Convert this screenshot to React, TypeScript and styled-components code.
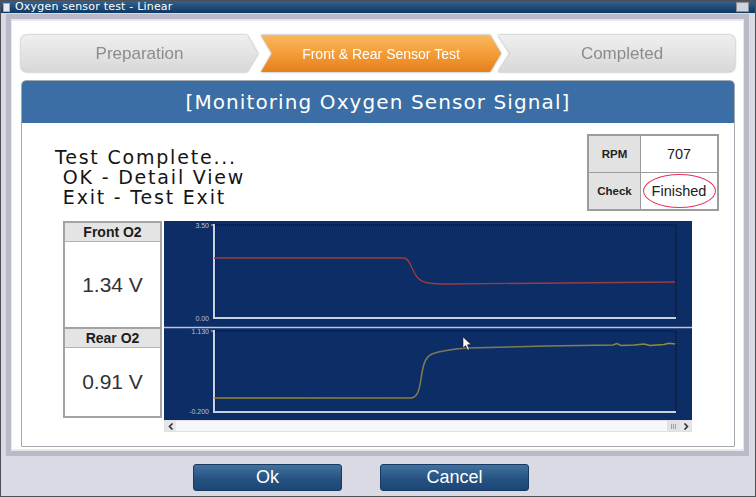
import styled, { createGlobalStyle } from 'styled-components';

const GlobalStyle = createGlobalStyle`
  html, body {
    margin: 0;
    padding: 0;
    background: #d9dae3;
  }
  body {
    width: 756px;
    height: 497px;
    overflow: hidden;
    font-family: "Liberation Sans", Arial, sans-serif;
  }
`;

const Window = styled.div`
  width: 756px;
  height: 497px;
  box-sizing: border-box;
  border: 1px solid #4d4f57;
  background: #d9dae3;
  display: flex;
  flex-direction: column;
`;

const TitleBar = styled.div`
  height: 12px;
  flex: none;
  display: flex;
  align-items: center;
  padding: 0 6px 0 2px;
  background: linear-gradient(#33618f, #0f3862);
  color: #fff;
  font: 11px/12px "DejaVu Sans", sans-serif;
  letter-spacing: 0.2px;
`;

const TitleIcon = styled.span`
  width: 5px;
  height: 7px;
  background: #e8ecf2;
  border: 1px solid #9fb0c4;
  margin-right: 5px;
`;

const CloseBox = styled.span`
  margin-left: auto;
  width: 11px;
  height: 8px;
  background: #cfd3da;
  border: 1px solid #8a8e98;
`;

const Frame = styled.div`
  margin: 1px 6px 0 5px;
  border: 5px solid #b8bac7;
  padding: 2px 1px;
  background: #e6e7ec;
`;

const Panel = styled.div`
  background: #fff;
  padding: 14px 8px 2px 9px;
`;

const StepBar = styled.div`
  display: flex;
  height: 37px;
  filter: drop-shadow(0 0 0.8px #959595);
`;

type StepKind = 'first' | 'middle' | 'last';

const shapes: Record<StepKind, string> = {
  first: 'polygon(0 0, calc(100% - 11px) 0, 100% 50%, calc(100% - 11px) 100%, 0 100%)',
  middle:
    'polygon(0 0, calc(100% - 11px) 0, 100% 50%, calc(100% - 11px) 100%, 0 100%, 11px 50%)',
  last: 'polygon(0 0, 100% 0, 100% 100%, 0 100%, 12px 50%)',
};

const Step = styled.div<{ $w: number; $kind: StepKind; $active?: boolean }>`
  flex: none;
  width: ${(p) => p.$w}px;
  margin-left: ${(p) => (p.$kind === 'middle' ? 3 : p.$kind === 'last' ? -3 : 0)}px;
  padding-left: ${(p) => (p.$kind === 'last' ? 11 : 0)}px;
  box-sizing: border-box;
  display: flex;
  align-items: center;
  justify-content: center;
  border-radius: ${(p) => (p.$kind === 'first' ? '6px 0 0 6px' : p.$kind === 'last' ? '0 6px 6px 0' : '0')};
  clip-path: ${(p) => shapes[p.$kind]};
  background: ${(p) =>
    p.$active ? 'linear-gradient(#fbb95e, #f29a34 55%, #e5801c)' : 'linear-gradient(#efefef, #d8d8d8)'};
  color: ${(p) => (p.$active ? '#fff' : '#8c8c8c')};
  font-size: ${(p) => (p.$active ? 14 : 17)}px;
`;

const Card = styled.div`
  margin-top: 8px;
  border: 1px solid #a4a8b0;
  border-radius: 5px 5px 0 0;
  overflow: hidden;
`;

const CardHeader = styled.div`
  height: 42px;
  display: flex;
  align-items: center;
  justify-content: center;
  background: #3a6ea4;
  color: #fff;
  font: 20px "DejaVu Sans", sans-serif;
  letter-spacing: 1.1px;
`;

const CardBody = styled.div`
  padding: 11px 0 14px;
`;

const TopRow = styled.div`
  display: flex;
  justify-content: space-between;
  padding: 0 15px 0 33px;
`;

const Message = styled.div`
  margin-top: 13px;
  font: 19px/20px "DejaVu Sans", sans-serif;
  letter-spacing: 1.8px;
  color: #141414;
  white-space: pre;
`;

const InfoTable = styled.table`
  border-collapse: collapse;
  width: 132px;
  height: 77px;
  border: 2px solid #9c9c9c;
  table-layout: fixed;
`;

const InfoRow = styled.tr`
  height: 37px;
`;

const LabelCell = styled.td`
  width: 51px;
  padding: 0;
  background: #e2e2e2;
  border: 1px solid #9c9c9c;
  font-size: 11.5px;
  font-weight: bold;
  text-align: center;
  color: #222;
`;

const ValueCell = styled.td`
  padding: 0;
  border: 1px solid #9c9c9c;
  text-align: center;
  vertical-align: middle;
  font-size: 14.5px;
  color: #222;
`;

const Ring = styled.span`
  display: inline-flex;
  vertical-align: middle;
  align-items: center;
  justify-content: center;
  width: 73px;
  height: 34px;
  box-sizing: border-box;
  border: 1.5px solid #e8335f;
  border-radius: 50%;
`;

const GraphRow = styled.div`
  display: flex;
  gap: 2px;
  margin-top: 10px;
  padding-left: 41px;
`;

const SensorBox = styled.div`
  width: 99px;
  height: 197px;
  box-sizing: border-box;
  border: 2px solid #a3a3a3;
  display: flex;
  flex-direction: column;
`;

const SensorHead = styled.div`
  height: 18px;
  flex: none;
  display: flex;
  align-items: center;
  justify-content: center;
  background: #e4e4e4;
  border-bottom: 1px solid #b4b4b4;
  font-size: 14px;
  font-weight: bold;
  color: #1c1c1c;
`;

const SensorValue = styled.div<{ $h: number; $divider?: boolean }>`
  height: ${(p) => p.$h}px;
  flex: none;
  display: flex;
  align-items: center;
  justify-content: center;
  border-bottom: ${(p) => (p.$divider ? '2px solid #a3a3a3' : 'none')};
  font-size: 21px;
  color: #333;
`;

const ChartCol = styled.div`
  width: 528px;
  display: flex;
  flex-direction: column;
`;

const ChartSvg = styled.svg`
  display: block;
`;

const ScrollBar = styled.div`
  height: 12px;
  box-sizing: border-box;
  display: flex;
  background: #f7f7f9;
  border: 1px solid #e0e0e4;
`;

const ScrollButton = styled.span`
  width: 11px;
  display: flex;
  align-items: center;
  justify-content: center;
  background: #e6e7ea;
`;

const ScrollGrip = styled.span`
  margin-left: auto;
  width: 13px;
  display: flex;
  align-items: center;
  justify-content: center;
  gap: 1px;
  background: #e1e2e6;
  & > i {
    width: 1px;
    height: 5px;
    background: #9da0a8;
  }
`;

const ButtonRow = styled.div`
  display: flex;
  gap: 38px;
  padding: 8px 0 0 192px;
`;

const DialogButton = styled.button`
  width: 149px;
  height: 27px;
  border: 1px solid #163a62;
  border-radius: 3px;
  background: linear-gradient(#41719f, #24507f 60%, #1c4676);
  color: #fff;
  font-family: "Liberation Sans Narrow", "Liberation Sans", Arial, sans-serif;
  font-stretch: condensed;
  font-size: 18px;
  padding: 0;
`;

const Chevron = ({ dir }: { dir: 'l' | 'r' }) => (
  <svg width="6" height="7" viewBox="0 0 6 7">
    <path
      d={dir === 'l' ? 'M4.5 0.5 L1.5 3.5 L4.5 6.5' : 'M1.5 0.5 L4.5 3.5 L1.5 6.5'}
      fill="none"
      stroke="#333"
      strokeWidth="1.6"
    />
  </svg>
);

function Chart() {
  return (
    <ChartSvg width="528" height="199" viewBox="0 0 528 199">
      <defs>
        <linearGradient id="rearLine" gradientUnits="userSpaceOnUse" x1="50" y1="0" x2="511" y2="0">
          <stop offset="0" stopColor="#9c8530" />
          <stop offset="0.42" stopColor="#8a7e3a" />
          <stop offset="0.5" stopColor="#717a62" />
          <stop offset="0.75" stopColor="#7d8048" />
          <stop offset="1" stopColor="#948d34" />
        </linearGradient>
      </defs>
      <rect width="528" height="199" fill="#0d2d66" />

      {/* front panel */}
      <rect x="51" y="4" width="461" height="93" fill="none" stroke="#020a1a" strokeDasharray="1 1" />
      <path d="M50 3 V97 H512" fill="none" stroke="#c9d0de" strokeWidth="2" />
      <path d="M47 4 H50" stroke="#c9d0de" />
      <text x="45" y="7" fontSize="7" fill="#b8c1d4" textAnchor="end" fontFamily="Liberation Sans">3.50</text>
      <text x="45" y="100" fontSize="7" fill="#b8c1d4" textAnchor="end" fontFamily="Liberation Sans">0.00</text>
      <path
        d="M50 37 L240 37 C246 37 248 50 253 56 C258 62 264 63 286 63 C330 63 420 62 511 61"
        fill="none"
        stroke="#9a3c40"
        strokeWidth="1.3"
      />

      <path d="M0 106.5 H528" stroke="#bcc4d6" strokeWidth="1.5" />

      {/* rear panel */}
      <rect x="51" y="110" width="461" height="81" fill="none" stroke="#020a1a" strokeDasharray="1 1" />
      <path d="M50 109 V191 H512" fill="none" stroke="#c9d0de" strokeWidth="2" />
      <path d="M47 110 H50" stroke="#c9d0de" />
      <text x="45" y="113" fontSize="7" fill="#b8c1d4" textAnchor="end" fontFamily="Liberation Sans">1.130</text>
      <text x="45" y="193" fontSize="7" fill="#b8c1d4" textAnchor="end" fontFamily="Liberation Sans">-0.200</text>
      <path
        d="M50 177 L246 177 C253 177 255 171 257 158 C259 144 261 136 268 133 C276 130 290 128 303 127 L383 125 L449 124 L453 122.5 L457 124.5 L470 124 L480 123 L486 124.5 L500 123.5 L505 122.3 L511 123"
        fill="none"
        stroke="url(#rearLine)"
        strokeWidth="1.5"
      />

      {/* mouse cursor */}
      <path
        d="M299 116 L299 127 L301.6 124.6 L303.6 129 L305.4 128.2 L303.4 123.8 L307 123.6 Z"
        fill="#fff"
        stroke="#222"
        strokeWidth="0.6"
      />
    </ChartSvg>
  );
}

export default function App() {
  return (
    <>
      <GlobalStyle />
      <Window>
        <TitleBar>
          <TitleIcon />
          Oxygen sensor test - Linear
          <CloseBox />
        </TitleBar>

        <Frame>
          <Panel>
            <StepBar>
              <Step $w={237} $kind="first">Preparation</Step>
              <Step $w={240} $kind="middle" $active>
                Front &amp; Rear Sensor Test
              </Step>
              <Step $w={237} $kind="last">Completed</Step>
            </StepBar>

            <Card>
              <CardHeader>[Monitoring Oxygen Sensor Signal]</CardHeader>
              <CardBody>
                <TopRow>
                  <Message>
                    {'Test Complete...\n OK - Detail View\n Exit - Test Exit'}
                  </Message>
                  <InfoTable>
                    <tbody>
                      <InfoRow>
                        <LabelCell>RPM</LabelCell>
                        <ValueCell>707</ValueCell>
                      </InfoRow>
                      <InfoRow>
                        <LabelCell>Check</LabelCell>
                        <ValueCell>
                          <Ring>Finished</Ring>
                        </ValueCell>
                      </InfoRow>
                    </tbody>
                  </InfoTable>
                </TopRow>

                <GraphRow>
                  <SensorBox>
                    <SensorHead>Front O2</SensorHead>
                    <SensorValue $h={85} $divider>1.34 V</SensorValue>
                    <SensorHead>Rear O2</SensorHead>
                    <SensorValue $h={68}>0.91 V</SensorValue>
                  </SensorBox>
                  <ChartCol>
                    <Chart />
                    <ScrollBar>
                      <ScrollButton>
                        <Chevron dir="l" />
                      </ScrollButton>
                      <ScrollGrip>
                        <i />
                        <i />
                        <i />
                      </ScrollGrip>
                      <ScrollButton>
                        <Chevron dir="r" />
                      </ScrollButton>
                    </ScrollBar>
                  </ChartCol>
                </GraphRow>
              </CardBody>
            </Card>
          </Panel>
        </Frame>

        <ButtonRow>
          <DialogButton>Ok</DialogButton>
          <DialogButton>Cancel</DialogButton>
        </ButtonRow>
      </Window>
    </>
  );
}
